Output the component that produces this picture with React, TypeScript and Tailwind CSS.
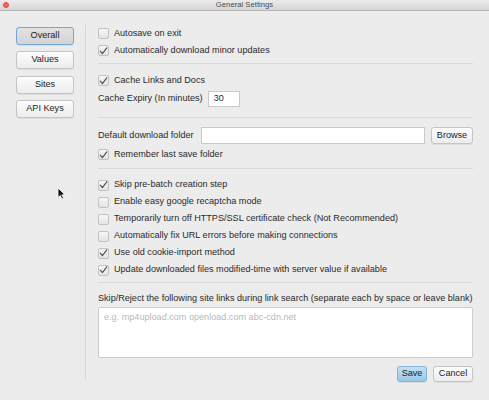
import React from 'react';

const font = { fontFamily: '"Liberation Sans", Arial, sans-serif' };

const Check = ({ checked }: { checked?: boolean }) => (
    <span className="w-[11px] h-[11px] mr-[5px] shrink-0 rounded-[2px] border border-[#c2c2c2] bg-gradient-to-b from-[#f7f7f7] to-[#e4e4e4] flex items-center justify-center">
        {checked && (
            <svg width="9" height="8" viewBox="0 0 9 8" fill="none">
                <path d="M1.3 4.2 L3.4 6.6 L7.8 0.8" stroke="#4a4a4a" strokeWidth="1.1" strokeLinecap="round" strokeLinejoin="round" />
            </svg>
        )}
    </span>
);

const Row = ({ label, checked }: { label: string; checked?: boolean }) => (
    <div className="h-[17px] flex items-center">
        <Check checked={checked} />
        <span>{label}</span>
    </div>
);

const Btn = ({ label, kind }: { label: string; kind?: 'selected' | 'primary' }) => {
    let cls = 'border-[#c4c4c4] from-[#fdfdfd] to-[#ececec]';
    if (kind === 'selected') cls = 'border-[#72a8d9] from-[#e2e2e2] to-[#d4d4d4]';
    if (kind === 'primary') cls = 'border-[#83b3d6] from-[#c3e0f3] to-[#96c7e8]';
    return (
        <div className={`h-full w-full rounded-[3px] border bg-gradient-to-b shadow-[0_1px_0_rgba(0,0,0,0.06)] flex items-center justify-center text-[#222] ${cls}`}>
            {label}
        </div>
    );
};

const Sep = ({ className }: { className: string }) => (
    <div className={`h-px bg-[#d9d9d9] ${className}`} />
);

export default function App() {
    return (
        <div className="relative w-[489px] h-[400px] bg-[#ececec] text-[9.1px] text-[#2a2a2a] overflow-hidden" style={font}>
            {/* title bar */}
            <div className="relative h-[11px] bg-gradient-to-b from-[#ececec] to-[#d6d6d6] border-b border-[#b6b6b6] flex items-center justify-center">
                <span className="absolute left-[3px] top-[2px] w-[6px] h-[6px] rounded-full bg-[#fc605c] border border-[#df4944]" />
                <span className="text-[7.7px] text-[#4b4b4b] leading-none">General Settings</span>
            </div>

            <div className="flex pt-[14px]">
                {/* sidebar */}
                <div className="w-[86px] h-[355px] border-r border-[#d6d6d6] pl-[16px] pt-[2px] flex flex-col gap-[6.3px]">
                    <div className="w-[58px] h-[18px]"><Btn label="Overall" kind="selected" /></div>
                    <div className="w-[58px] h-[18px]"><Btn label="Values" /></div>
                    <div className="w-[58px] h-[18px]"><Btn label="Sites" /></div>
                    <div className="w-[58px] h-[18px]"><Btn label="API Keys" /></div>
                </div>

                {/* content */}
                <div className="flex-1 pl-[12px] pr-[16px] flex flex-col">
                    <Row label="Autosave on exit" />
                    <Row label="Automatically download minor updates" checked />
                    <Sep className="mt-[4px]" />
                    <div className="mt-[8px]">
                        <Row label="Cache Links and Docs" checked />
                    </div>
                    <div className="mt-[2px] h-[16px] flex items-center">
                        <span className="mr-[5px]">Cache Expiry (In minutes)</span>
                        <div className="w-[32px] h-[16px] bg-white border border-[#c9c9c9] flex items-center pl-[5px]">30</div>
                    </div>
                    <Sep className="mt-[10px]" />
                    <div className="mt-[9px] h-[17px] flex items-center">
                        <span className="w-[103px]">Default download folder</span>
                        <div className="w-[224px] h-[17px] bg-white border border-[#c9c9c9]" />
                        <div className="ml-[6px] w-[42px] h-[17px]"><Btn label="Browse" /></div>
                    </div>
                    <div className="mt-[2px]">
                        <Row label="Remember last save folder" checked />
                    </div>
                    <Sep className="mt-[5px]" />
                    <div className="mt-[7.5px]">
                        <Row label="Skip pre-batch creation step" checked />
                        <Row label="Enable easy google recaptcha mode" />
                        <Row label="Temporarily turn off HTTPS/SSL certificate check (Not Recommended)" />
                        <Row label="Automatically fix URL errors before making connections" />
                        <Row label="Use old cookie-import method" checked />
                        <Row label="Update downloaded files modified-time with server value if available" checked />
                    </div>
                    <Sep className="mt-[3.5px]" />
                    <div className="mt-[10px] h-[11px] leading-[11px] whitespace-nowrap">
                        Skip/Reject the following site links during link search (separate each by space or leave blank)
                    </div>
                    <div className="mt-[3px] h-[51px] bg-white border border-[#cdcdcd] rounded-[2px] px-[5px] pt-[3px] text-[#b9b9b9]">
                        e.g. mp4upload.com openload.com abc-cdn.net
                    </div>
                    <div className="mt-[8px] h-[16px] flex justify-end gap-[6px]">
                        <div className="w-[30px] h-[16px]"><Btn label="Save" kind="primary" /></div>
                        <div className="w-[40px] h-[16px]"><Btn label="Cancel" /></div>
                    </div>
                </div>
            </div>

            {/* mouse pointer */}
            <svg className="absolute left-[57px] top-[187px]" width="9" height="13" viewBox="0 0 9 13">
                <path d="M1 1 L1 10.5 L3.3 8.4 L5 12 L6.6 11.3 L4.9 7.8 L8 7.8 Z" fill="#111" stroke="#fff" strokeWidth="0.8" strokeLinejoin="round" />
            </svg>
        </div>
    );
}
